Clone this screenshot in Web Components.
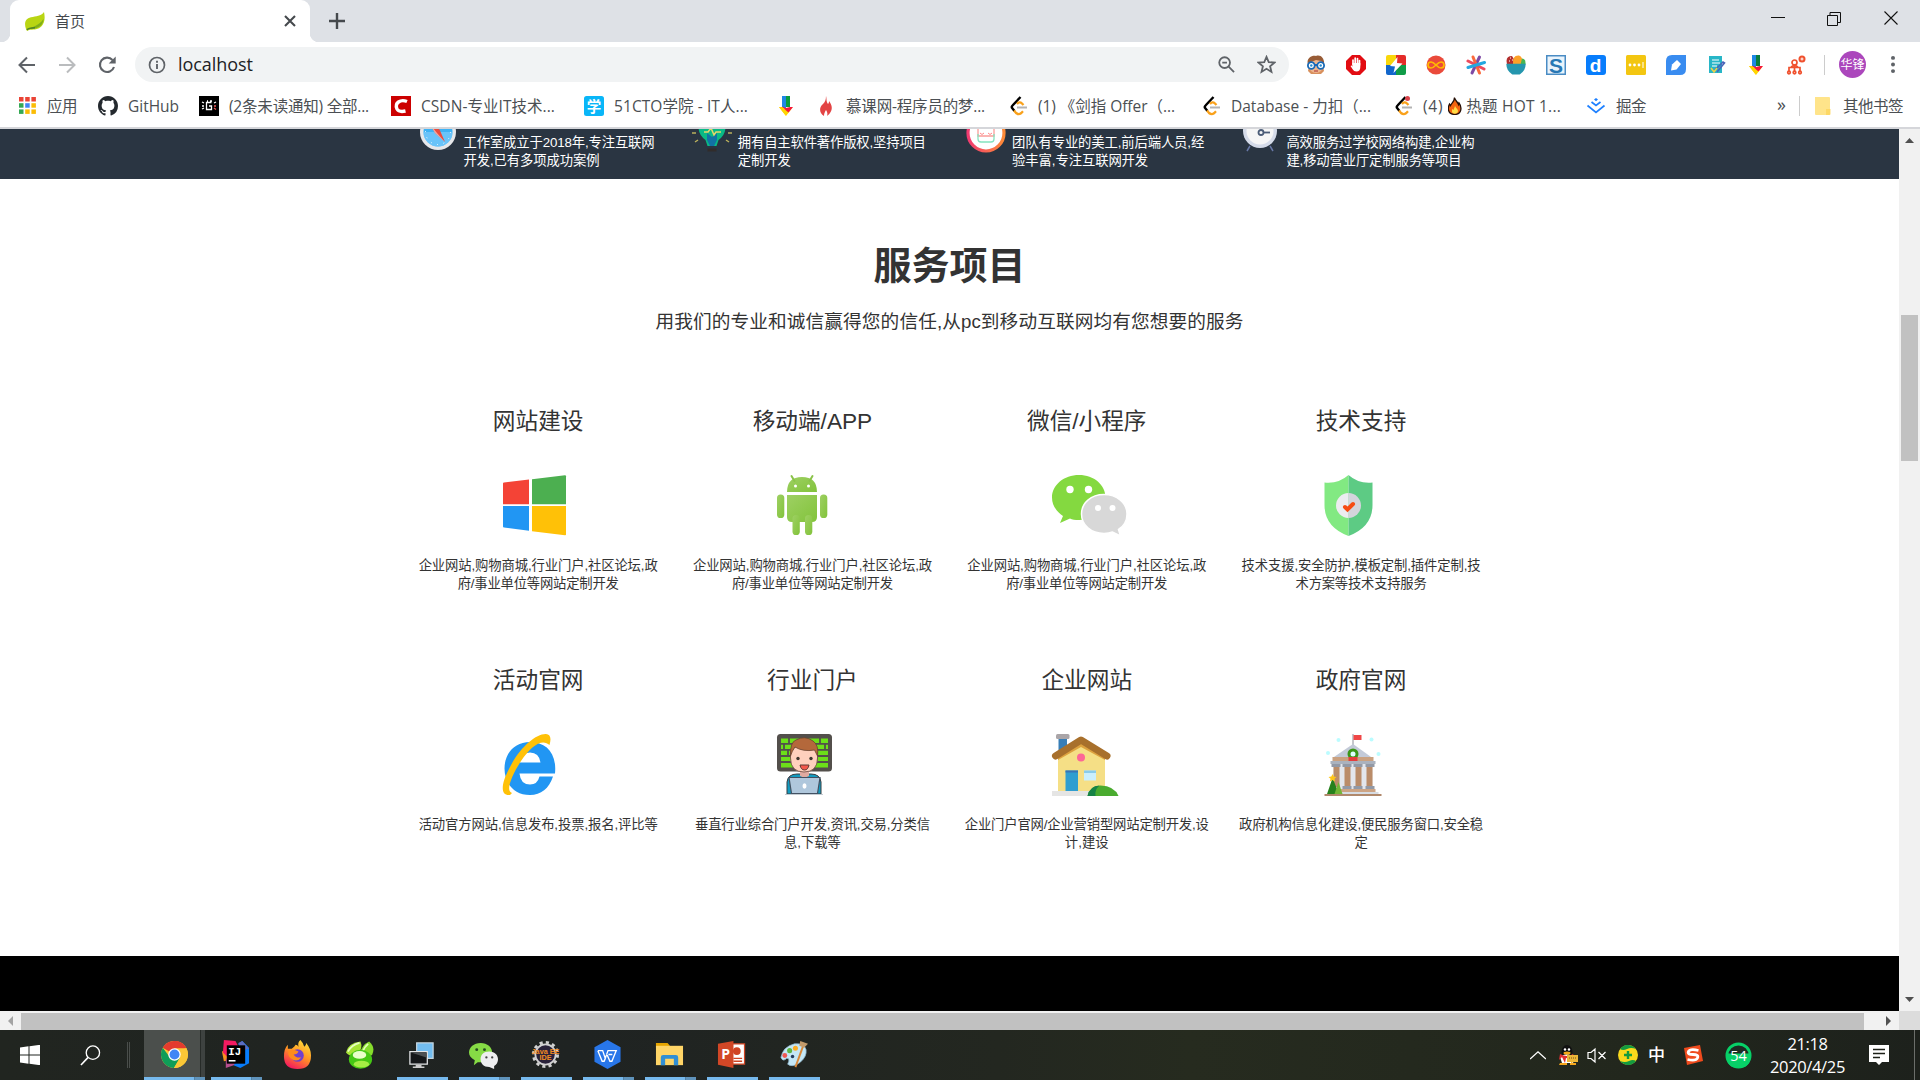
<!DOCTYPE html>
<html lang="zh-CN">
<head>
<meta charset="utf-8">
<title>首页</title>
<style>
html,body{margin:0;height:100%;overflow:hidden;background:#fff}
body{display:flex;flex-direction:column;width:1920px;height:1080px;font-family:"Liberation Sans","Noto Sans CJK SC",sans-serif}
</style>
</head>
<body>
<desktop-screen></desktop-screen>
<script>
const UI = '"Open Sans","Noto Sans CJK SC",sans-serif';

/* viewBox and markup of every icon */
const ICONS = {
leaf:['0 0 20 20','<path d="M19 0c1.500 7 .5 14-5 17-4 2-8 1-10 2l-2 1-1-2C-1 12 0 7 6 5.500c5-1 10-1 13-5.500z" fill="#b9d512"/><path d="M18.500 7c0 5-3 9-8 10-3 .5-5 .500-7 1.500 3-3 11-4 15-11.500z" fill="#7fae1a"/><path d="M2 19c1-2 4-2.500 8-2.500" stroke="#4d8328" stroke-width="1.500" fill="none"/>'],
x:['0 0 12 12','<path d="M1 1l10 10M11 1L1 11" stroke="#45494d" stroke-width="2.100"/>'],
plus:['0 0 16 16','<path d="M8 0v16M0 8h16" stroke="#45494d" stroke-width="2.400"/>'],
min:['0 0 14 14','<path d="M0 6.500h14" stroke="#111" stroke-width="1"/>'],
restore:['0 0 14 14','<path d="M.5 3.500h10v10H.5zM3 3.500V.5h10.500v10H11" fill="none" stroke="#111"/>'],
close:['0 0 14 14','<path d="M.5.5l13 13M13.500.5l-13 13" stroke="#111" stroke-width="1.100"/>'],
back:['0 0 18 18','<path d="M17 9H2M9 1.500L1.500 9 9 16.500" fill="none" stroke="#5f6368" stroke-width="2"/>'],
fwd:['0 0 18 18','<path d="M1 9h15M9 1.500L16.500 9 9 16.500" fill="none" stroke="#babcbe" stroke-width="2"/>'],
reload:['0 0 18 18','<path d="M16 11a7.200 7.200 0 1 1-1.500-7" fill="none" stroke="#5f6368" stroke-width="2.100"/><path d="M17.700.5v7h-7z" fill="#5f6368"/>'],
info:['0 0 18 18','<circle cx="9" cy="9" r="7.500" fill="none" stroke="#5f6368" stroke-width="1.700"/><path d="M9 8v5M9 4.800v2" stroke="#5f6368" stroke-width="1.900"/>'],
zoomout:['0 0 18 18','<circle cx="7" cy="7" r="5.700" fill="none" stroke="#5f6368" stroke-width="1.900"/><path d="M4.500 7h5M11 11l6 6" stroke="#5f6368" stroke-width="1.900"/>'],
star:['0 0 18 18','<path d="M9 1.800l2.100 5 5.400.4-4.100 3.500 1.300 5.300L9 13.100 4.300 16l1.300-5.300L1.500 7.200l5.400-.4z" fill="none" stroke="#5f6368" stroke-width="1.700"/>'],
apps:['0 0 17 17',[0,1,2].map(r=>[0,1,2].map(c=>`<rect x="${c*6.200}" y="${r*6.200}" width="4.500" height="4.500" fill="${[['#ea4335','#ea4335','#ea4335'],['#34a853','#4285f4','#fbbc05'],['#34a853','#fbbc05','#fbbc05']][r][c]}"/>`).join('')).join('')],
github:['0 0 16 16','<path fill="#24292e" d="M8 0C3.580 0 0 3.580 0 8c0 3.540 2.290 6.530 5.470 7.590.4.070.55-.17.55-.38 0-.19-.01-.82-.01-1.490-2.010.37-2.530-.49-2.690-.94-.09-.23-.48-.94-.82-1.130-.28-.15-.68-.52-.01-.53.63-.01 1.080.58 1.230.82.72 1.210 1.870.87 2.330.66.070-.52.28-.87.51-1.070-1.780-.2-3.640-.89-3.640-3.950 0-.87.31-1.590.82-2.150-.08-.2-.36-1.020.08-2.120 0 0 .67-.21 2.200.82.64-.18 1.320-.27 2-.27s1.360.09 2 .27c1.530-1.040 2.200-.82 2.200-.82.44 1.100.16 1.920.08 2.120.51.56.82 1.270.82 2.150 0 3.070-1.870 3.750-3.650 3.950.29.25.54.73.54 1.480 0 1.070-.01 1.930-.01 2.200 0 .21.15.46.55.38A8.010 8.010 0 0 0 16 8c0-4.420-3.580-8-8-8z"/>'],
oj:['0 0 20 20','<path d="M0 0h20v20H0z"/><g fill="none" stroke="#fff" stroke-width="1.300"><path d="M12.500 6.500H7.500v7h5V10H10M8 5h1M11 5h2"/><path d="M3 6l2 1M3 10h2M3 13l2-1M17 6l-2 1"/><path d="M15 10h2M15 12l2 1.500" stroke="#e55"/></g>'],
csdn:['0 0 20 20','<path d="M0 0h20v20H0z" fill="#c00"/><path d="M16 5.500Q11 3.500 7.500 6T6 13q2 3.500 8.500 2" fill="none" stroke="#fff" stroke-width="3.400"/>'],
cto:['0 0 20 20','<rect width="20" height="20" rx="2.500" fill="#09b6f8"/><text x="10" y="15.500" font-size="14.500" font-weight="700" text-anchor="middle" fill="#fff" font-family="Noto Sans CJK SC">学</text>'],
arrow:['0 0 20 20','<path d="M6 0h4v12H6z" fill="#1e88e5"/><path d="M10 0h4v11h-4z" fill="#0a9d3c"/><path d="M3 11h4l3 9z" fill="#ffc400"/><path d="M3 11l7 9 7-9-4 3z" fill="#ffd600"/><path d="M6 10.500l4 1.500 4-1h3l-4.500 5.500-2.500-2z" fill="#f5163b"/>'],
flame:['0 0 20 20','<path d="M10 0c1 4 0 5 2 8 1-1 1-2 1-3 3 4 4 8 1 12-1 1.500-2 2-3 3 1-3 0-4-1-6-1 2-2 3-2 6C3 17 3 11 7 8c2-2 3-4 3-8z" fill="#e34444"/>'],
leet:['0 0 20 20','<path d="M12.500 1L4.500 9.500q-1.500 1.500 0 3l2 2.500" fill="none" stroke="#000" stroke-width="2.400"/><path d="M9 8q2.500-3 5-.5l1.500 1.500M6 14.500l2 2.500q2.500 2 5 .3l2-2" fill="none" stroke="#f9a11b" stroke-width="2.300"/><path d="M9 11.500h10" stroke="#b3b3b3" stroke-width="2"/>'],
leetdot:['0 0 20 20','<path d="M12.500 1L4.500 9.500q-1.500 1.500 0 3l2 2.500" fill="none" stroke="#000" stroke-width="2.400"/><path d="M9 8q2.500-3 5-.5l1.500 1.500M6 14.500l2 2.500q2.500 2 5 .3l2-2" fill="none" stroke="#f9a11b" stroke-width="2.300"/><path d="M9 11.500h10" stroke="#b3b3b3" stroke-width="2"/><circle cx="14.500" cy="2.500" r="2.500" fill="#d9434b"/>'],
fire:['0 0 14 18','<path d="M6.500.5c.5 3 3 4 4 7l.5-1.500c3 4 3 11-4 11.500C-.5 17.500-.5 11 1.500 7l1 1.500C3.500 6 6.500 5 6.500.5z" fill="#f4640f" stroke="#251008" stroke-width="1.300"/><path d="M7 8c0 3 3 3.500 3 6 0 3.500-6 3.500-6 .5l0-2.500 1.500 1C6 11.500 7 10 7 8z" fill="#ffdc46"/>'],
juejin:['0 0 20 20','<path d="M10 2l2 1.500L10 5.200 8 3.500z" fill="#1e80ff"/><path d="M5.500 6l4.500 3.500L14.500 6M1.500 9.500L10 16.500l8.500-7" fill="none" stroke="#1e80ff" stroke-width="1.700"/>'],
folder:['0 0 20 20','<path d="M2 1h14q1 0 1 1v16q0 1-1 1H3q-1 0-1-1z" fill="#ffe48a"/><path d="M13 13h4.500v5q0 1-1 1H13z" fill="#fcd45b" opacity=".8"/>'],
e0:['0 0 20 20','<path d="M2 16l1.500-8h13L18 16l-3 3H5z" fill="#d8905d"/><circle cx="10" cy="11" r="7" fill="#efb58e"/><path d="M2 10C0 4 5 0 10 1c5-2 9 3 8 9l-3-4-5-1-5 2z" fill="#985c36"/><path d="M8 10h4" stroke="#1565c0" stroke-width="2"/><g fill="#fff" stroke="#1769b7" stroke-width="1.800"><circle cx="5.300" cy="10.500" r="3.400"/><circle cx="14.700" cy="10.500" r="3.400"/></g><circle cx="5.300" cy="10.500" r="1.200" fill="#278bd0"/><circle cx="14.700" cy="10.500" r="1.200" fill="#278bd0"/><path d="M8 16h4" stroke="#a33" stroke-width="1"/>'],
e1:['0 0 20 20','<path d="M6 0h8l6 6v8l-6 6H6l-6-6V6z" fill="#e20c12"/><path d="M7 10V5M9.200 9V3M11.500 9V3.500M13.500 10V5.500" stroke="#fff" stroke-width="1.700" stroke-linecap="round"/><path d="M6.200 8h8.100v4q0 4.500-4 4.500-2.500 0-3.500-2L4.500 11l1.200-.6 1.300 1z" fill="#fff"/>'],
e2:['0 0 20 20','<path d="M2 0h8v10H0V2q0-2 2-2z" fill="#f9d70b"/><path d="M10 0h8q2 0 2 2v8H10z" fill="#e42c29"/><path d="M0 10h10v10H2q-2 0-2-2z" fill="#1266cb"/><path d="M10 10h10v8q0 2-2 2h-8z" fill="#109c48"/><path d="M11.500 2L4 11l5 .5L7.500 18 16.500 8.500 11 8z" fill="#fff"/>'],
e3:['0 0 20 20','<circle cx="10" cy="10" r="9.500" fill="#ea4a3b"/><path d="M10 10c-2-2-3-3-5-3-4 0-4 6 0 6 2 0 3-1 5-3s3-3 5-3c4 0 4 6 0 6-2 0-3-1-5-3z" fill="none" stroke="#ffba00" stroke-width="1.700"/>'],
e4:['0 0 20 20','<g stroke-width="3" stroke-linecap="round"><path d="M13.500 2L6 18" stroke="#7f4aa4"/><path d="M7 2l6.500 16" stroke="#fb6a3c"/><path d="M2 6l16 8" stroke="#ed4b5c"/><path d="M2 12.500l16.500-5" stroke="#24a7df"/></g>'],
e5:['0 0 20 20','<path d="M1 9Q-1 1 6 1l5 8z" fill="#b22e2e"/><path d="M7 9q-1-9 6-8.500Q17 2 17 9z" fill="#fda128"/><path d="M16 3.500q4 0 3.500 6h-5z" fill="#47b553"/><path d="M4 3h1M3 6h1M6 5h1" stroke="#fff"/><path d="M.3 8.800h19.400q0 7-6 10.700h-7.400Q.3 15.800.3 8.800z" fill="#2596ae"/>'],
e6:['0 0 20 20','<path d="M0 0h20v20H0z" fill="#4a8cc4"/><path d="M1.500 1.500h17v17h-17z" fill="#eaf4fc"/><text x="10" y="17.500" text-anchor="middle" font-size="21" font-weight="700" font-family="Liberation Sans" fill="#2878b5">S</text>'],
e7:['0 0 20 20','<rect width="20" height="20" rx="3" fill="#087dfc"/><text x="9.500" y="16.500" text-anchor="middle" font-size="19" font-weight="700" font-family="Liberation Sans" fill="#fff">d</text>'],
e8:['0 0 20 20','<rect width="20" height="20" rx="1.500" fill="#f3c611"/><g fill="#fff"><circle cx="4" cy="10" r="1.400"/><circle cx="8.500" cy="10" r="1.400"/><circle cx="13" cy="10" r="1.400"/><path d="M16.500 7h1v6h-1z"/></g>'],
e9:['0 0 20 20','<path d="M6 0h14v14q0 6-6 6H0V6q0-6 6-6z" fill="#398cf0"/><path d="M5 15.500l1-6L11 5l4 4-4.500 5.500z" fill="#fff"/>'],
e10:['0 0 20 20','<path d="M3 1h13v17H3z" fill="#28b6c7"/><path d="M6 5h7M6 8h8M6 11h5" stroke="#fff" stroke-width="1.200"/><path d="M9 15l8-8 1.500 1-7.500 9" fill="none" stroke="#4a62b8" stroke-width="1.600"/><path d="M5 13l3 4 3-4" fill="none" stroke="#f0d146" stroke-width="1.600"/>'],
e11:['0 0 20 20','<path d="M6 0h4v12H6z" fill="#1e88e5"/><path d="M10 0h4v11h-4z" fill="#0a7d3c"/><path d="M3 11h4l3 9z" fill="#ffc400"/><path d="M3 11l7 9 7-9-4 3z" fill="#ffd600"/><path d="M6 10.500l4 1.500 4-1h3l-4.500 5.500-2.500-2z" fill="#f5163b"/>'],
e12:['0 0 20 20','<g fill="none" stroke="#f0512e" stroke-width="1.700"><circle cx="8.500" cy="7.500" r="2.500"/><path d="M8.500 10v6M3 16v-3.500h11V16M5 12l3.500-2 3.500 2"/><circle cx="3" cy="17.500" r="1.300"/><circle cx="8.500" cy="17.500" r="1.300"/><circle cx="14" cy="17.500" r="1.300"/></g><circle cx="16" cy="4" r="3.500" fill="#f0512e"/><path d="M14.500 4h3M16 2.500v3" stroke="#fff"/>'],
dots:['0 0 4 18','<circle cx="2" cy="2" r="2" fill="#5f6368"/><circle cx="2" cy="9" r="2" fill="#5f6368"/><circle cx="2" cy="16" r="2" fill="#5f6368"/>'],
/* header features, lower part visible */
compass:['0 0 40 22','<circle cx="20" cy="3" r="18" fill="#e6e7ea"/><circle cx="20" cy="3" r="14.500" fill="#3db2f5"/><path d="M20 3m-14.500 0a14.500 14.500 0 0 0 29 0" fill="#7ccafb" opacity=".7"/><circle cx="20" cy="3" r="12.500" fill="none" stroke="#fff" stroke-dasharray="1 5.500"/><path d="M11-6L21.500.5 27 13 17 4z" fill="#e94a3b"/><path d="M11-6L17 4l10 9-8-9z" fill="#fff" opacity=".5"/>'],
bulb:['0 0 40 24','<path d="M6.500-2h27q0 8-7 13l-2 6h-9l-2-6q-7-5-7-13z" fill="#09b985"/><path d="M15 4l5 4 5-4v7l-3 6h-4l-3-6z" fill="#1272a4"/><path d="M12 3h4l3-4 3 7 2-3h5" fill="none" stroke="#e4d56c" stroke-width="1.500"/><path d="M15.500 19.500h9v3h-9z" fill="#302c2b"/><path d="M0 4h4M36 4h4M3 13l3-2M37 13l-3-2" stroke="#b9af5c" stroke-width="1.500"/>'],
team:['0 0 40 24','<defs><linearGradient id="r"><stop stop-color="#f13a70"/><stop offset="1" stop-color="#ff8b37"/></linearGradient></defs><circle cx="20" cy="4" r="18" fill="#fff" stroke="url(#r)" stroke-width="3.200"/><path d="M12-2h16v9H12z" fill="none" stroke="#fa9c99" stroke-width="1.300"/><path d="M12 5v5q0 3 3 3h10q3 0 3-3V5" fill="none" stroke="#85e3bf" stroke-width="1.300"/><path d="M14 4q2 3 4 0M22 4q2 3 4 0" fill="none" stroke="#f88"/>'],
clock:['0 0 40 24','<circle cx="20" cy="2" r="17" fill="#d5dbe9"/><circle cx="20" cy="2" r="13.500" fill="#f6f6f6"/><circle cx="21" cy="3.500" r="2.500" fill="none" stroke="#4b5c77" stroke-width="1.800"/><path d="M24 3.500h6" stroke="#4b5c77" stroke-width="1.800"/><path d="M10 17l-3 5M30 17l3 5" stroke="#6878a7" stroke-width="1.500"/>'],
/* service cards */
windows:['0 0 76 62','<path d="M0 8.500Q0 7.500 1 7.400L26 4.500v24.700H0z" fill="#f44336"/><path d="M29 4.200L62 .2Q63 .2 63 1.200v28H29z" fill="#4caf50"/><path d="M0 31h26v24.800L1 52.500Q0 52.400 0 51.500z" fill="#2196f3"/><path d="M29 31h34v28.500q0 .8-1 .7L29 56.200z" fill="#ffc107"/>'],
android:['0 0 76 62','<defs><linearGradient id="a" x2="1" y2="1"><stop stop-color="#9ed063"/><stop offset="1" stop-color="#82c33b"/></linearGradient></defs><g fill="url(#a)"><path d="M10 17Q10 2 25 2t15 15z"/><path d="M10 20h30v22q0 5-5 5H15q-5 0-5-5z"/><rect y="19.500" width="7.300" height="23.500" rx="3.600"/><rect x="43" y="19.500" width="7.300" height="23.500" rx="3.600"/><rect x="15.500" y="40" width="7.300" height="20" rx="3.600"/><rect x="28" y="40" width="7.300" height="20" rx="3.600"/></g><path d="M14.500 1l3 5M35.500 1l-3 5" stroke="#8bc34a" stroke-width="2" stroke-linecap="round"/><circle cx="18.500" cy="11" r="1.500" fill="#fff"/><circle cx="31.500" cy="11" r="1.500" fill="#fff"/>'],
wechat:['0 0 76 62','<path d="M27 0c15 0 26.500 10 26.500 22.500S42 45 27 45q-6 0-9-1.500L8 48l3-7C4 36 0 30 0 22.500 0 10 12 0 27 0z" fill="#84d940"/><circle cx="18" cy="14.500" r="3.700" fill="#fff"/><circle cx="36.500" cy="14.500" r="3.700" fill="#fff"/><path d="M52 19.500c-13 0-22.500 8.500-22.500 19.500S39 58.500 52 58.500q5 0 8.500-1.500l8 4-2-6.500C72 51 75 45.500 75 39c0-11-10-19.500-23-19.500z" fill="#d8d8d8" stroke="#fff" stroke-width="1.500"/><circle cx="46" cy="33" r="3" fill="#fff"/><circle cx="60.500" cy="33" r="3" fill="#fff"/>'],
shield:['1.5 0 76 62','<path d="M24 0Q14 9 0 7.500V30q0 22 24 31z" fill="#82e982"/><path d="M24 0q10 9 24 7.500V30q0 22-24 31z" fill="#5dcb84"/><path d="M24 18a12.500 12.500 0 0 0 0 25z" fill="#ececf0"/><path d="M24 18a12.500 12.500 0 0 1 0 25z" fill="#d4d4dc"/><path d="M20.500 32l2.500 2.500 5.500-5.500" fill="none" stroke="#f64b13" stroke-width="4" stroke-linecap="round"/>'],
ie:['1 0 76 62','<path fill="#2196f3" fill-rule="evenodd" d="M28 8C12 8 2.500 20 2.500 34.500S12 61 28 61c11 0 19-6.500 23-18.500H37.500q-2 8-9.500 8-9.500 0-10.500-11H53C55 19 44 8 28 8zM17.500 28.500Q19 18.500 28 18.500t10.500 10z"/><path d="M44 0C34-.5 17 14 7 35-1 50-2 62 8 61l2-2c-7-2 0-18 9-32C29 12 40 4 47.500 11 49.500 4 48.500.5 44 0z" fill="#ffc107"/>'],
dev:['0 0 76 62','<rect width="55" height="37.500" rx="3.500" fill="#534f4b"/><path d="M4 4.500h47v29H4z" fill="#6cdf19"/><path d="M4 9.800h47M4 15.900h47M4 22h47M4 28h47M12 4v6M7 10v6M11 16v6M43 4v6M48 10v6M40 22v6" stroke="#534f4b" stroke-width="1.800"/><path d="M10 60V48q1-8 10-8h14q9 0 10 8v12z" fill="#139bc0" stroke="#383c40"/><path d="M23 33h9v9l-4.500 2L23 42z" fill="#dfaaa0"/><path d="M13.500 24V15l14-6 13 6v9q0 14-13.500 14T13.500 24z" fill="#ffd0bd" stroke="#68463d" stroke-width=".8"/><path d="M13.500 22Q13 8 19 6q9-5 17 1 6 4 4.500 15l-3-6Q26 18 18 13q-3 4-4.500 9z" fill="#b4683b" stroke="#684330" stroke-width=".8"/><circle cx="21" cy="24.500" r="1.700" fill="#40362f"/><circle cx="34" cy="24.500" r="1.700" fill="#40362f"/><path d="M23 31h9q-1 5-4.500 5T23 31z" fill="#f5584c" stroke="#613a33"/><path d="M12 43.500h31l-2.500 16h-26z" fill="#afc7dc" stroke="#435162" stroke-width="1.200"/><ellipse cx="27.500" cy="52" rx="2" ry="2.700" fill="#fff"/><path d="M8 60.500h38" stroke="#c3ccd3"/>'],
house:['1 0 76 62','<path d="M7.500 0H16v17H7.500z" fill="#387eb7"/><rect x="5" width="13.500" height="5" rx="1.500" fill="#aaa5a8"/><path d="M7 23L30 9l24 14v35H7z" fill="#f5df86"/><path d="M7 26L30 13l24 13v-5L30 7 7 20z" fill="#dda23f"/><path d="M4.500 22L30 6l26 16" fill="none" stroke="#a8702c" stroke-width="7" stroke-linejoin="round" stroke-linecap="round"/><circle cx="30" cy="23.500" r="4" fill="#fd6696"/><path d="M14.500 36.500H27V58H14.500z" fill="#309ed0"/><path d="M14.500 36.500H27v2H14.500z" fill="#3974b5"/><path d="M33 36.500h12v10H33z" fill="#c9effe"/><path d="M33 36.500h12v2.500H33z" fill="#8accea"/><path d="M1 57h56v5H1z" fill="#e5e5e4"/><path d="M36.500 62q2-10 13-10.500 14 .5 18 10.500z" fill="#4aab2f"/><path d="M36.500 62q2-10 12-10.500-5 4-4 10.500z" fill="#168346"/>'],
gov:['1.5 0 76 62','<path d="M28.500 0v12" stroke="#8c8f99"/><path d="M29 1h8v5h-8z" fill="#f04747"/><path d="M28.500 10L48 24H8z" fill="#c3cad8"/><path d="M8 23h41v4H8z" fill="#caa180"/><path d="M6 27h45v3H6z" fill="#aab2be"/><path d="M9 30h39v25H9z" fill="#e3e6ec"/><path d="M9 31h6v22H9zM20 31h6v22h-6zM31 31h6v22h-6zM42 31h6v22h-6z" fill="#ba8c69"/><path d="M7 30h9v3H7zM18 30h9v3h-9zM29 30h9v3h-9zM41 30h9v3h-9zM18 52h9v3h-9zM29 52h9v3h-9zM41 52h9v3h-9z" fill="#9299a6"/><path d="M8 55h43v3H8z" fill="#cda484"/><path d="M4 58h50v2H4z" fill="#d7dce3"/><path d="M0 60h57v2H0z" fill="#b0886b"/><circle cx="28.500" cy="20" r="4" fill="#dff" stroke="#3b9619" stroke-width="3"/><path d="M24 23h9v4h-9z" fill="#e43d3d"/><path d="M8 44L2.500 60h12z" fill="#26811c"/><path d="M14 48l-4 12h8z" fill="#72b636"/><path d="M8 40l1.200 2.600 2.800.3-2 1.800.6 2.800L8 46l-2.600 1.500.6-2.800-2-1.800 2.800-.3z" fill="#ffc619"/><g fill="#bbfcff"><circle cx="14" cy="6" r="2"/><circle cx="3.500" cy="19" r="2"/><circle cx="47" cy="5.500" r="2"/><circle cx="54" cy="20" r="2"/></g>'],
/* taskbar */
win:['0 0 20 20','<path d="M0 2.500L8.500 1.300v8.200H0zM9.500 1.200L20-.2v9.700H9.500zM0 10.500h8.500v8.200L0 17.500zM9.500 10.500H20v9.700L9.500 18.800z" fill="#fff"/>'],
search:['0 0 22 22','<circle cx="13.500" cy="8" r="7" fill="none" stroke="#fff" stroke-width="1.400"/><path d="M8.500 13L1 21" stroke="#fff" stroke-width="1.700"/>'],
chrome:['0 0 48 48','<circle cx="24" cy="24" r="24" fill="#fbc736"/><path d="M24 24L3.200 12A24 24 0 0 1 44.800 12z" fill="#e33b2e"/><path d="M24 0v13h20.800A24 24 0 0 0 24 0z" fill="#e33b2e"/><path d="M3.200 12A24 24 0 0 0 23 48l11-19-10-5-9 4z" fill="#0f9d58"/><path d="M24 13h21.300A24 24 0 0 1 23 48l11-18z" fill="#fbc736"/><circle cx="24" cy="24" r="11" fill="#fff"/><circle cx="24" cy="24" r="8.800" fill="#4086f5"/>'],
idea:['0 0 30 30','<path d="M1 12l8-3v12l-6 1z" fill="#f7921e"/><path d="M3 0l12 1 3 6-9 13L2 13z" fill="#f51b62"/><path d="M5 19l11 6-11 4z" fill="#b74e8e"/><path d="M18 4l4-3 7 7v16l-9 5-7-3 8-9z" fill="#087cfa"/><path d="M18 3l4-2 7 8-9 2z" fill="#5d6cc0"/><path d="M6 5.500h19v19H6z" fill="#000"/><text x="7.500" y="16" font-size="11" font-weight="700" fill="#fff" font-family="Liberation Mono">IJ</text><path d="M8 21.500h7" stroke="#fff" stroke-width="1.600"/>'],
firefox:['0 0 30 30','<defs><linearGradient id="f" x1=".8" x2=".3" y2="1"><stop stop-color="#ffe23c"/><stop offset=".5" stop-color="#ff9324"/><stop offset="1" stop-color="#f5185f"/></linearGradient></defs><path d="M18 0q3 3 4 7 2-1 2-4 5 6 5 13 0 14-14 14T1 17Q1 9 5 5v4l4 0q3-2 4-4 2 0 3 2-1-5 2-7z" fill="url(#f)"/><circle cx="15" cy="16" r="6.500" fill="#7140cd"/><path d="M6 11q5-2 10 1-1 3-5 3 2 4 8 3-5 6-11 1-4-4-2-8z" fill="#ff8b1b"/>'],
lime:['0 0 30 30','<path d="M1 13Q3 3 16 1.500Q19 8 13 15Q6 19 1 13z" fill="#a6e435"/><path d="M3 12Q7 5 15 3" fill="none" stroke="#e8ffc0" stroke-width="1.800"/><path d="M15 15Q17 5 25 1.500q7 6 3 14l-6 3z" fill="#86dc2c"/><path d="M18 13q2-6 6-9" fill="none" stroke="#e4ffb8" stroke-width="1.800"/><ellipse cx="16" cy="20" rx="12" ry="9.800" fill="#45c814"/><ellipse cx="15" cy="15.500" rx="7" ry="4" fill="#e9ffca"/><ellipse cx="17" cy="25" rx="8" ry="3.500" fill="#a5ee44"/>'],
pc:['0 0 30 30','<path d="M10 3h17v16H10z" fill="#72bdf0" stroke="#c4d4dd" stroke-width="1.300"/><path d="M3 12h18v13H3z" fill="#151719" stroke="#e4e6e8" stroke-width="1.300"/><path d="M4 13h16v5z" fill="#4d5052"/><path d="M9 25.500h6v2H9zM6 27.500h12V29H6z" fill="#ccc"/>'],
wc:['0 0 30 30','<path d="M12 3c7 0 12 4.500 12 10s-5 10-12 10H9l-4 3 1-5C2 19 0 16 0 13 0 7.500 5 3 12 3z" fill="#86db45"/><circle cx="8" cy="10" r="1.500" fill="#254b21"/><circle cx="16" cy="10" r="1.500" fill="#254b21"/><path d="M21 12c-6 0-9 3.500-9 8s3 8 9 8l5 2v-3q4-2 4-7c0-4-3-8-9-8z" fill="#eeeef0"/><circle cx="18" cy="18" r="1.200" fill="#444"/><circle cx="24" cy="18" r="1.200" fill="#444"/>'],
java:['0 0 30 30','<circle cx="15" cy="15" r="12.500" fill="none" stroke="#d1d1d1" stroke-width="3" stroke-dasharray="3.270 3.270"/><circle cx="15" cy="15" r="10.500" fill="#29223a" stroke="#d2d2d2" stroke-width="1.800"/><text x="15" y="14.500" text-anchor="middle" font-size="7.500" font-weight="700" fill="#f28b22" font-family="Liberation Sans">Java EE</text><text x="15" y="21" text-anchor="middle" font-size="7.500" font-weight="700" fill="#f28b22" font-family="Liberation Sans">IDE</text>'],
wps:['0 0 30 30','<path d="M15 0l13.500 7.500v15L15 30 1.500 22.500v-15z" fill="#2876e9"/><path d="M5 11h5l2.700 8L15.500 11H24l-4.500 11h-2L14 14M12.700 19l-1.200 3h-2L5 11M16 15h4" fill="none" stroke="#fff" stroke-width="1.400"/>'],
files:['0 0 30 30','<path d="M1 3h12l2 2.500v3H1z" fill="#e5a400"/><path d="M1 6h28v20H1z" fill="#ffd567"/><path d="M6 26v-8q0-2.500 2.500-2.500h13Q24 15.500 24 18v8h-4.500v-6.500h-9V26z" fill="#318fd4"/>'],
ppt:['0 0 30 30','<path d="M16 4h12.500v21H16z" fill="#fff" stroke="#d04423" stroke-width="1.300"/><circle cx="20.500" cy="11.500" r="4" fill="#d04423"/><path d="M17 19h9M17 22h9" stroke="#d04423" stroke-width="1.500"/><path d="M1 4l16-3v28L1 25.500z" fill="#d24726"/><text x="9" y="20" text-anchor="middle" font-size="14.500" font-weight="700" fill="#fff" font-family="Open Sans">P</text>'],
paint:['0 0 30 30','<path d="M2 18Q4 7 16 4q10-1 12 6 1 7-6 13-8 6-13 2 3-6-1-6-4 4-6-1z" fill="#c4e7f6" stroke="#8fb9d0" stroke-width=".8"/><circle cx="6" cy="16" r="2.500" fill="#ef5753"/><circle cx="11" cy="11" r="2.600" fill="#5eb642"/><circle cx="17" cy="8.500" r="2.600" fill="#fbac26"/><circle cx="14" cy="17" r="1.800" fill="#243c5c"/><path d="M25 6l-8 22" stroke="#d98839" stroke-width="2"/><path d="M22 1l8 3-4 4-5-2z" fill="#c39b6b"/>'],
chev:['0 0 16 10','<path d="M0 9l8-8 8 8" fill="none" stroke="#fff" stroke-width="1.400"/>'],
qq:['0 0 20 20','<ellipse cx="9" cy="7" rx="5.500" ry="7" fill="#111"/><path d="M2 12q7-6 15 1l-2 5H4z" fill="#fff"/><path d="M2 9q7 4 13 0l1 2q-4 3-8 2l-1 5-3-6-3 3z" fill="#e02f31"/><path d="M2 18h7v2H1zM12 18h6v2h-6z" fill="#f6a61c"/><ellipse cx="9" cy="8" rx="3.500" ry="1.500" fill="#f5a817"/><circle cx="7" cy="4.500" r="1.200" fill="#fff"/><circle cx="11" cy="4.500" r="1.200" fill="#fff"/><path d="M9 10h11v7h-5l-2 2v-2H9z" fill="#ecb638"/><path d="M11 13h7" stroke="#745118" stroke-dasharray="1 1"/>'],
mute:['0 0 20 20','<path d="M1 7.500h3L8 4v13l-4-3.500H1zM11.500 7l7 7M18.500 7l-7 7" fill="none" stroke="#fff" stroke-width="1.200"/>'],
safe:['0 0 20 20','<circle cx="10" cy="10" r="10" fill="#f9d91c"/><path d="M2 4Q6-1 12 .2q4 .8 6 3.800-5-2-9 0T2 4zM18 16q-4 5-10 3.800-4-.8-6-3.800 5 2 9 0t7 0z" fill="#149b3f"/><path d="M10 6v8M6 10h8" stroke="#149b3f" stroke-width="2.400"/>'],
sogou:['0 0 20 20','<path d="M1 3l16-3 3 16-16 4z" fill="#f04b1d"/><path d="M15.500 5.500Q7 3.500 5.500 6.500T10 9.500q6 0 4.500 3.500T4.500 14.500" fill="none" stroke="#fff" stroke-width="2.800"/>'],
load:['0 0 28 28','<circle cx="14" cy="14" r="12" fill="#1d2c24" stroke="#07d168" stroke-width="3"/><path d="M1 12h26q0 15-13 15T1 12z" fill="#07d168"/><text x="14" y="19.500" text-anchor="middle" font-size="15" fill="#fff" font-family="Open Sans">54</text>'],
note:['0 0 20 20','<path d="M0 0h20v17h-7l-3 3-3-3H0z" fill="#fff"/><path d="M4 4.500h12M4 8.500h12M4 12.500h7" stroke="#1d2018" stroke-width="1.300"/>']
};

class UiIcon extends HTMLElement{
  connectedCallback(){
    const [vb,body]=ICONS[this.getAttribute('name')], w=this.getAttribute('w')||20, h=this.getAttribute('h')||w;
    this.attachShadow({mode:'open'}).innerHTML=`<style>:host{display:block;flex:none;width:${w}px;height:${h}px}svg{display:block;width:100%;height:100%;overflow:${+w>70?'visible':'hidden'}}</style><svg viewBox="${vb}" preserveAspectRatio="none">${body}</svg>`;
  }
}
customElements.define('ui-icon',UiIcon);

/* one line of text, tracked so that it fills the width given in w */
class FitText extends HTMLElement{
  connectedCallback(){
    const w=+this.getAttribute('w');
    this.attachShadow({mode:'open'}).innerHTML=`<style>:host{display:block;flex:none;white-space:pre}span{display:inline-block}</style><span><slot></slot></span>`;
    const s=this.shadowRoot.querySelector('span'), n=[...this.textContent].length;
    if(w) s.style.letterSpacing=(w-s.getBoundingClientRect().width)/n+'px';
  }
}
customElements.define('fit-text',FitText);

const define=(tag,fn)=>customElements.define(tag,class extends HTMLElement{
  connectedCallback(){ this.attachShadow({mode:'open'}).innerHTML=fn(this); }
});

define('tab-strip',()=>`<style>
:host{display:flex;height:42px;background:#dee1e6;font:15px/20px ${UI};color:#45494d}
.tab{position:relative;display:flex;align-items:center;margin-left:10px;width:300px;background:#fff;border-radius:9px 9px 0 0;box-sizing:border-box;padding:0 14px 0 15px}
.tab:before,.tab:after{content:"";position:absolute;bottom:0;width:9px;height:9px}
.tab:before{left:-9px;background:radial-gradient(circle at 0 0,#dee1e6 9px,#fff 9.500px)}
.tab:after{right:-9px;background:radial-gradient(circle at 100% 0,#dee1e6 9px,#fff 9.500px)}
fit-text{margin-left:10px;flex:1}
.plus{margin:13px 0 0 19px}
.win{margin-left:auto;display:flex;gap:42.500px;padding:11px 22px 0 0}
.win :nth-child(2){margin:1px 1px 0 -1px}
</style><div class="tab"><ui-icon name="leaf" w="20" h="19"></ui-icon><fit-text w="30">首页</fit-text><ui-icon name="x" w="12"></ui-icon></div>
<ui-icon class="plus" name="plus" w="16"></ui-icon>
<div class="win"><ui-icon name="min" w="14"></ui-icon><ui-icon name="restore" w="14"></ui-icon><ui-icon name="close" w="14"></ui-icon></div>`);

define('tool-bar',()=>`<style>
:host{display:flex;align-items:center;height:45px;font:18px/24px ${UI};color:#202124}
.nav{display:flex;gap:22px;padding:0 18px 0 18px;width:99px}
.omni{display:flex;align-items:center;width:1154px;height:35px;border-radius:18px;background:#f1f3f4;box-sizing:border-box;padding:0 13px 0 13px}
fit-text{margin-left:12px;flex:1;padding-bottom:2px}
.omni ui-icon:last-child{margin-left:22px}
.ext{display:flex;gap:20px;margin-left:17px}
.sep{width:1px;height:20px;background:#ccc;margin-left:18px}
.me{width:27px;height:27px;border-radius:50%;background:#ab47bc;color:#fff;font-size:12px;display:flex;align-items:center;justify-content:center;margin:0 25px 0 14px}
</style><div class="nav"><ui-icon name="back" w="18"></ui-icon><ui-icon name="fwd" w="18"></ui-icon><ui-icon name="reload" w="18"></ui-icon></div>
<div class="omni"><ui-icon name="info" w="18"></ui-icon><fit-text w="75">localhost</fit-text><ui-icon name="zoomout" w="17"></ui-icon><ui-icon name="star" w="19"></ui-icon></div>
<div class="ext">${Array.from({length:13},(_,i)=>`<ui-icon name="e${i}" w="20"></ui-icon>`).join('')}</div>
<div class="sep"></div><div class="me">华锋</div><ui-icon name="dots" w="4" h="17"></ui-icon>`);

define('book-mark',el=>`<style>
:host{display:flex;align-items:center;gap:10px;width:${el.getAttribute('size')}px;flex:none}
</style><ui-icon name="${el.getAttribute('icon')}" w="${el.getAttribute('icon')=='apps'?17:20}"></ui-icon><slot></slot>`);

define('bookmark-bar',()=>`<style>
:host{display:flex;align-items:center;height:40px;padding:0 17px 5px 19px;border-bottom:2px solid #d5d6da;font:15.500px/22px ${UI};color:#4b4f53;box-sizing:border-box}
.more{margin-left:auto;font-size:18px;line-height:20px;padding-bottom:4px}
.sep{width:1px;height:20px;background:#ccc;margin:0 13px 0 13px}
.mix{display:flex;align-items:center}
</style><book-mark size="79" icon="apps"><fit-text w="30" style="margin-left:1px">应用</fit-text></book-mark>
<book-mark size="101" icon="github"><fit-text w="51">GitHub</fit-text></book-mark>
<book-mark size="192" icon="oj"><fit-text w="140">(2条未读通知) 全部...</fit-text></book-mark>
<book-mark size="193" icon="csdn"><fit-text w="134">CSDN-专业IT技术...</fit-text></book-mark>
<book-mark size="192" icon="cto"><fit-text w="134">51CTO学院 - IT人...</fit-text></book-mark>
<book-mark size="40" icon="arrow"></book-mark>
<book-mark size="192" icon="flame"><fit-text w="139">慕课网-程序员的梦...</fit-text></book-mark>
<book-mark size="193" icon="leet"><fit-text w="137">(1) 《剑指 Offer（...</fit-text></book-mark>
<book-mark size="192" icon="leet"><fit-text w="140">Database - 力扣（...</fit-text></book-mark>
<book-mark size="193" icon="leetdot"><div class="mix"><fit-text w="25">(4) </fit-text><ui-icon name="fire" w="14" h="18"></ui-icon><fit-text w="99"> 热题 HOT 1...</fit-text></div></book-mark>
<book-mark size="70" icon="juejin"><fit-text w="30">掘金</fit-text></book-mark>
<div class="more">»</div><div class="sep"></div><book-mark size="90" icon="folder"><fit-text w="60">其他书签</fit-text></book-mark>`);

define('feature-item',el=>`<style>
:host{display:flex;width:274.300px;flex:none}
.t{padding:5px 0 0 5px;margin-left:1px;font-size:13.330px;line-height:18px;color:#fff}
</style><ui-icon name="${el.getAttribute('icon')}" w="40" h="${el.getAttribute('icon')=='compass'?22:24}"></ui-icon><div class="t"><slot></slot></div>`);

define('service-card',el=>`<style>
:host{display:block;width:274.300px;height:259px}
h3{margin:0;font-weight:400;font-size:22.670px;line-height:30px;display:flex;justify-content:center}
ui-icon{margin:39px 0 0 102px}
.d{margin-top:20px;display:flex;flex-direction:column;align-items:center;font-size:13.330px;line-height:18px}
</style><h3><slot name="title"></slot></h3><ui-icon name="${el.getAttribute('icon')}" w="76" h="62"></ui-icon><div class="d"><slot></slot></div>`);

const card=(icon,t,tw,...lines)=>`<service-card icon="${icon}"><fit-text slot="title" w="${tw}">${t}</fit-text>${lines.map(([s,w])=>`<fit-text w="${w}">${s}</fit-text>`).join('')}</service-card>`;

define('web-page',()=>`<style>
:host{display:flex;flex-direction:column;width:1899px;height:882px;overflow:hidden;color:#333;background:#fff}
.band{display:flex;height:50px;box-sizing:border-box;background:#2a3542;padding-left:417.500px;flex:none}
.band feature-item{height:50px}
.head{display:flex;flex-direction:column;align-items:center;padding-top:62px;height:165px}
h2{margin:0;font-size:38px;line-height:50px;font-weight:700}
.sub{font-size:18.670px;line-height:26px;margin-top:18px}
.grid{display:grid;grid-template-columns:repeat(4,274.300px);grid-template-rows:259px 259px;align-content:start;margin-left:401px;height:550px;flex:none}
.foot{height:55px;background:#000;flex:none}
</style><div class="band">
<feature-item icon="compass"><fit-text w="191">工作室成立于2018年,专注互联网</fit-text><fit-text w="136">开发,已有多项成功案例</fit-text></feature-item>
<feature-item icon="bulb"><fit-text w="188">拥有自主软件著作版权,坚持项目</fit-text><fit-text w="53">定制开发</fit-text></feature-item>
<feature-item icon="team"><fit-text w="192">团队有专业的美工,前后端人员,经</fit-text><fit-text w="136">验丰富,专注互联网开发</fit-text></feature-item>
<feature-item icon="clock"><fit-text w="188">高效服务过学校网络构建,企业构</fit-text><fit-text w="175">建,移动营业厅定制服务等项目</fit-text></feature-item></div>
<div class="head"><h2>服务项目</h2><fit-text class="sub" w="588">用我们的专业和诚信赢得您的信任,从pc到移动互联网均有您想要的服务</fit-text></div>
<div class="grid">
${card('windows','网站建设',90.700,['企业网站,购物商城,行业门户,社区论坛,政',239],['府/事业单位等网站定制开发',161])}
${card('android','移动端/APP',119.500,['企业网站,购物商城,行业门户,社区论坛,政',239],['府/事业单位等网站定制开发',161])}
${card('wechat','微信/小程序',119.500,['企业网站,购物商城,行业门户,社区论坛,政',239],['府/事业单位等网站定制开发',161])}
${card('shield','技术支持',90.700,['技术支援,安全防护,模板定制,插件定制,技',239],['术方案等技术支持服务',131])}
${card('ie','活动官网',90.700,['活动官方网站,信息发布,投票,报名,评比等',239])}
${card('dev','行业门户',90.700,['垂直行业综合门户开发,资讯,交易,分类信',235],['息,下载等',57])}
${card('house','企业网站',90.700,['企业门户官网/企业营销型网站定制开发,设',244],['计,建设',44])}
${card('gov','政府官网',90.700,['政府机构信息化建设,便民服务窗口,安全稳',244],['定',13.300])}
</div><div style="flex:1"></div><div class="foot"></div>`);

define('scroll-v',()=>`<style>
:host{display:flex;flex-direction:column;align-items:center;width:21px;height:882px;background:#f1f1f1}
svg{display:block}
.th{width:17px;height:146px;background:#c1c1c1;margin-top:172px}
.dn{margin-top:auto;padding-bottom:9px}
</style><svg style="margin-top:9px" width="9" height="5"><path d="M0 5L4.500 0 9 5z" fill="#505050"/></svg><div class="th"></div><svg class="dn" width="9" height="5"><path d="M0 0L4.500 5 9 0z" fill="#505050"/></svg>`);

define('scroll-h',()=>`<style>
:host{display:flex;align-items:center;height:19px;background:#f1f1f1}
svg{display:block}
.th{height:17px;width:1843px;background:#c1c1c1;align-self:flex-end}
.c{width:21px;height:19px;background:#dcdcdc;margin-left:auto}
</style><svg width="21" height="10"><path d="M13 0v10L8 5z" fill="#a3a3a3"/></svg><div class="th"></div><svg width="35" height="10"><path d="M22 0v10l5-5z" fill="#505050"/></svg><div class="c"></div>`);

define('task-button',el=>{
  const on=el.hasAttribute('active'),run=el.hasAttribute('run')||on,multi=el.hasAttribute('multi');
  return `<style>
:host{display:flex;flex-direction:column;align-items:center;width:${on?61:51}px;height:50px;margin-right:${on?6:11}px;${on?'background:linear-gradient(90deg,#4b4f4c 56px,#272b28 56px,#272b28 57px,#3e4240 57px);':''}}
.i{flex:1;display:flex;align-items:center;padding:2px ${on?1:2}px 0 0}
.u{width:100%;height:3px;${run?`background:${multi?`linear-gradient(90deg,#76b9ed calc(100% - 11px),#456e8e calc(100% - 11px),#5f93bb calc(100% - 10px))`:'#76b9ed'}`:''}}
</style><div class="i"><ui-icon name="${el.getAttribute('icon')}" w="${on?27:29}"></ui-icon></div><div class="u"></div>`});

define('task-bar',()=>`<style>
:host{display:flex;align-items:center;height:50px;background:linear-gradient(90deg,#212520,#1f2322 30%,#232720 52%,#262b1f 62%,#22271d 85%,#1d211c);color:#fff;font:16.500px/23px ${UI}}
.sep{width:1px;height:26px;border:solid #4a4e4b;border-width:0 1px;margin:0 14px 0 26px}
.apps{display:flex}
.tray{margin-left:auto;display:flex;align-items:center}
.zh{font-size:17px;width:17px;font-weight:500;padding-bottom:2px}
.time{display:flex;flex-direction:column;align-items:center;width:75px;margin:0 24px 0 18px}
.end{width:1px;height:50px;background:#6b6e6a;margin:0 5px 0 25px}
</style><ui-icon style="margin-left:20px" name="win" w="20"></ui-icon><ui-icon style="margin-left:40px" name="search" w="21"></ui-icon><div class="sep"></div>
<div class="apps"><task-button icon="chrome" active multi></task-button><task-button icon="idea" run multi></task-button><task-button icon="firefox"></task-button><task-button icon="lime"></task-button><task-button icon="pc" run></task-button><task-button icon="wc" run multi></task-button><task-button icon="java" run></task-button><task-button icon="wps" run multi></task-button><task-button icon="files" run multi></task-button><task-button icon="ppt" run></task-button><task-button icon="paint" run></task-button></div>
<div class="tray"><ui-icon name="chev" w="16" h="9"></ui-icon><ui-icon style="margin-left:12px" name="qq" w="20"></ui-icon><ui-icon style="margin-left:9px" name="mute" w="20"></ui-icon><ui-icon style="margin-left:11px" name="safe" w="20"></ui-icon><div class="zh" style="margin-left:10px">中</div><ui-icon style="margin-left:18px" name="sogou" w="20"></ui-icon><ui-icon style="margin-left:22px" name="load" w="27"></ui-icon>
<div class="time"><fit-text w="40">21:18</fit-text><fit-text w="75">2020/4/25</fit-text></div><ui-icon name="note" w="20"></ui-icon><div class="end"></div></div>`);

define('desktop-screen',()=>`<style>
:host{display:flex;flex-direction:column;width:1920px;height:1080px;overflow:hidden}
.view{display:flex;height:882px}
.chrome{display:flex;flex-direction:column;height:129px}
bookmark-bar{margin-top:2px}
</style><div class="chrome"><tab-strip></tab-strip><tool-bar></tool-bar><bookmark-bar></bookmark-bar></div>
<div class="view"><web-page></web-page><scroll-v></scroll-v></div><scroll-h></scroll-h><task-bar></task-bar>`);
</script>
</body>
</html>
